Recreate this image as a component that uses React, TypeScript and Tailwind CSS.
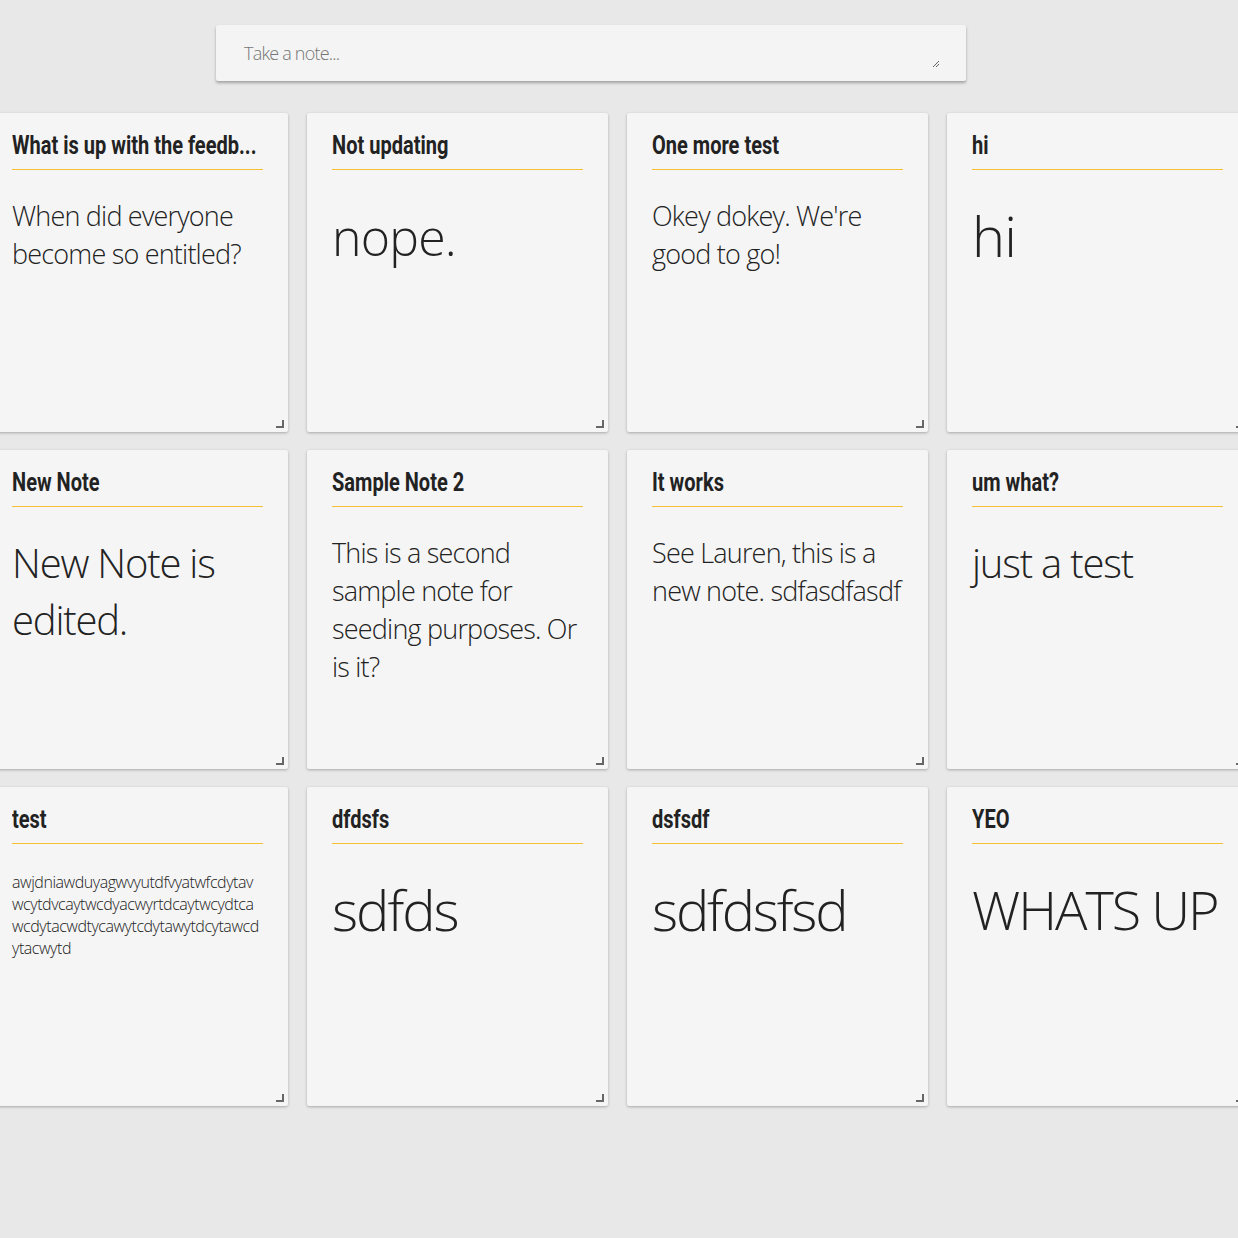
import React from "react";

type Note = {
  title: string;
  body: string;
  size: string;
};

const notes: Note[] = [
  { title: "What is up with the feedb...", body: "When did everyone become so entitled?", size: "text-[27px] leading-[38px] tracking-[-0.8px]" },
  { title: "Not updating", body: "nope.", size: "text-[50px] leading-[80px] tracking-[-0.8px]" },
  { title: "One more test", body: "Okey dokey. We're good to go!", size: "text-[27px] leading-[38px] tracking-[-0.8px]" },
  { title: "hi", body: "hi", size: "text-[56px] leading-[76px] tracking-[-0.8px]" },
  { title: "New Note", body: "New Note is edited.", size: "text-[40px] leading-[57px] tracking-[-1.2px]" },
  { title: "Sample Note 2", body: "This is a second sample note for seeding purposes. Or is it?", size: "text-[27px] leading-[38px] tracking-[-0.8px]" },
  { title: "It works", body: "See Lauren, this is a new note. sdfasdfasdf", size: "text-[27px] leading-[38px] tracking-[-0.8px]" },
  { title: "um what?", body: "just a test", size: "text-[40px] leading-[57px] tracking-[-1.2px]" },
  {
    title: "test",
    body: "awjdniawduyagwvyutdfvyatwfcdytav\nwcytdvcaytwcdyacwyrtdcaytwcydtca\nwcdytacwdtycawytcdytawytdcytawcd\nytacwytd",
    size: "text-[16px] leading-[22px] tracking-[-0.45px] whitespace-pre-line",
  },
  { title: "dfdsfs", body: "sdfds", size: "text-[56px] leading-[76px] tracking-[-2px]" },
  { title: "dsfsdf", body: "sdfdsfsd", size: "text-[56px] leading-[76px] tracking-[-2.2px]" },
  { title: "YEO", body: "WHATS UP", size: "text-[54px] leading-[76px] tracking-[-2px]" },
];

const Grip = ({ className }: { className: string }) => (
  <svg width="9" height="9" viewBox="0 0 9 9" className={className}>
    <path d="M8 1 V8 H1" stroke="#666" strokeWidth="2" fill="none" />
  </svg>
);

const NoteCard = ({ note }: { note: Note }) => {
  return (
    <div className="relative w-[301px] h-[319px] shrink-0 bg-[#f5f5f5] rounded-[2px] shadow-[0_1px_3px_rgba(0,0,0,0.28)] px-[25px] overflow-hidden">
      <div className="pt-[15px] pb-[7px] border-b-[1.5px] border-[#f5c132] whitespace-nowrap">
        <span className="inline-block origin-left scale-x-[0.77] font-['Roboto',sans-serif] font-bold text-[26px] leading-[34px] text-[#222]">
          {note.title}
        </span>
      </div>
      <div className={`mt-[27px] font-['Open_Sans',sans-serif] font-light text-[#222] ${note.size}`}>
        {note.body}
      </div>
      <Grip className="absolute right-[4px] bottom-[4px]" />
    </div>
  );
};

const App = () => {
  return (
    <div className="min-h-[1238px] w-full bg-[#e8e8e8] overflow-hidden">
      <div className="pt-[25px] pl-[216px]">
        <div className="relative w-[750px] h-[56px] bg-[#f4f4f4] rounded-[2px] shadow-[0_2px_3px_rgba(0,0,0,0.3)] flex items-center px-[28px]">
          <span className="font-['Open_Sans',sans-serif] font-light text-[18px] text-[#757575] tracking-[-0.8px]">
            Take a note...
          </span>
          <svg width="8" height="8" viewBox="0 0 8 8" className="absolute right-[26px] bottom-[13px]">
            <path d="M7 1 L1 7 M7 4 L4 7" stroke="#555" strokeWidth="0.9" />
          </svg>
        </div>
      </div>
      <div className="mt-[32px] ml-[-13px] w-[1261px] grid grid-cols-[repeat(4,301px)] gap-x-[19px] gap-y-[18px]">
        {notes.map((n, i) => (
          <NoteCard key={i} note={n} />
        ))}
      </div>
    </div>
  );
};

export default App;
